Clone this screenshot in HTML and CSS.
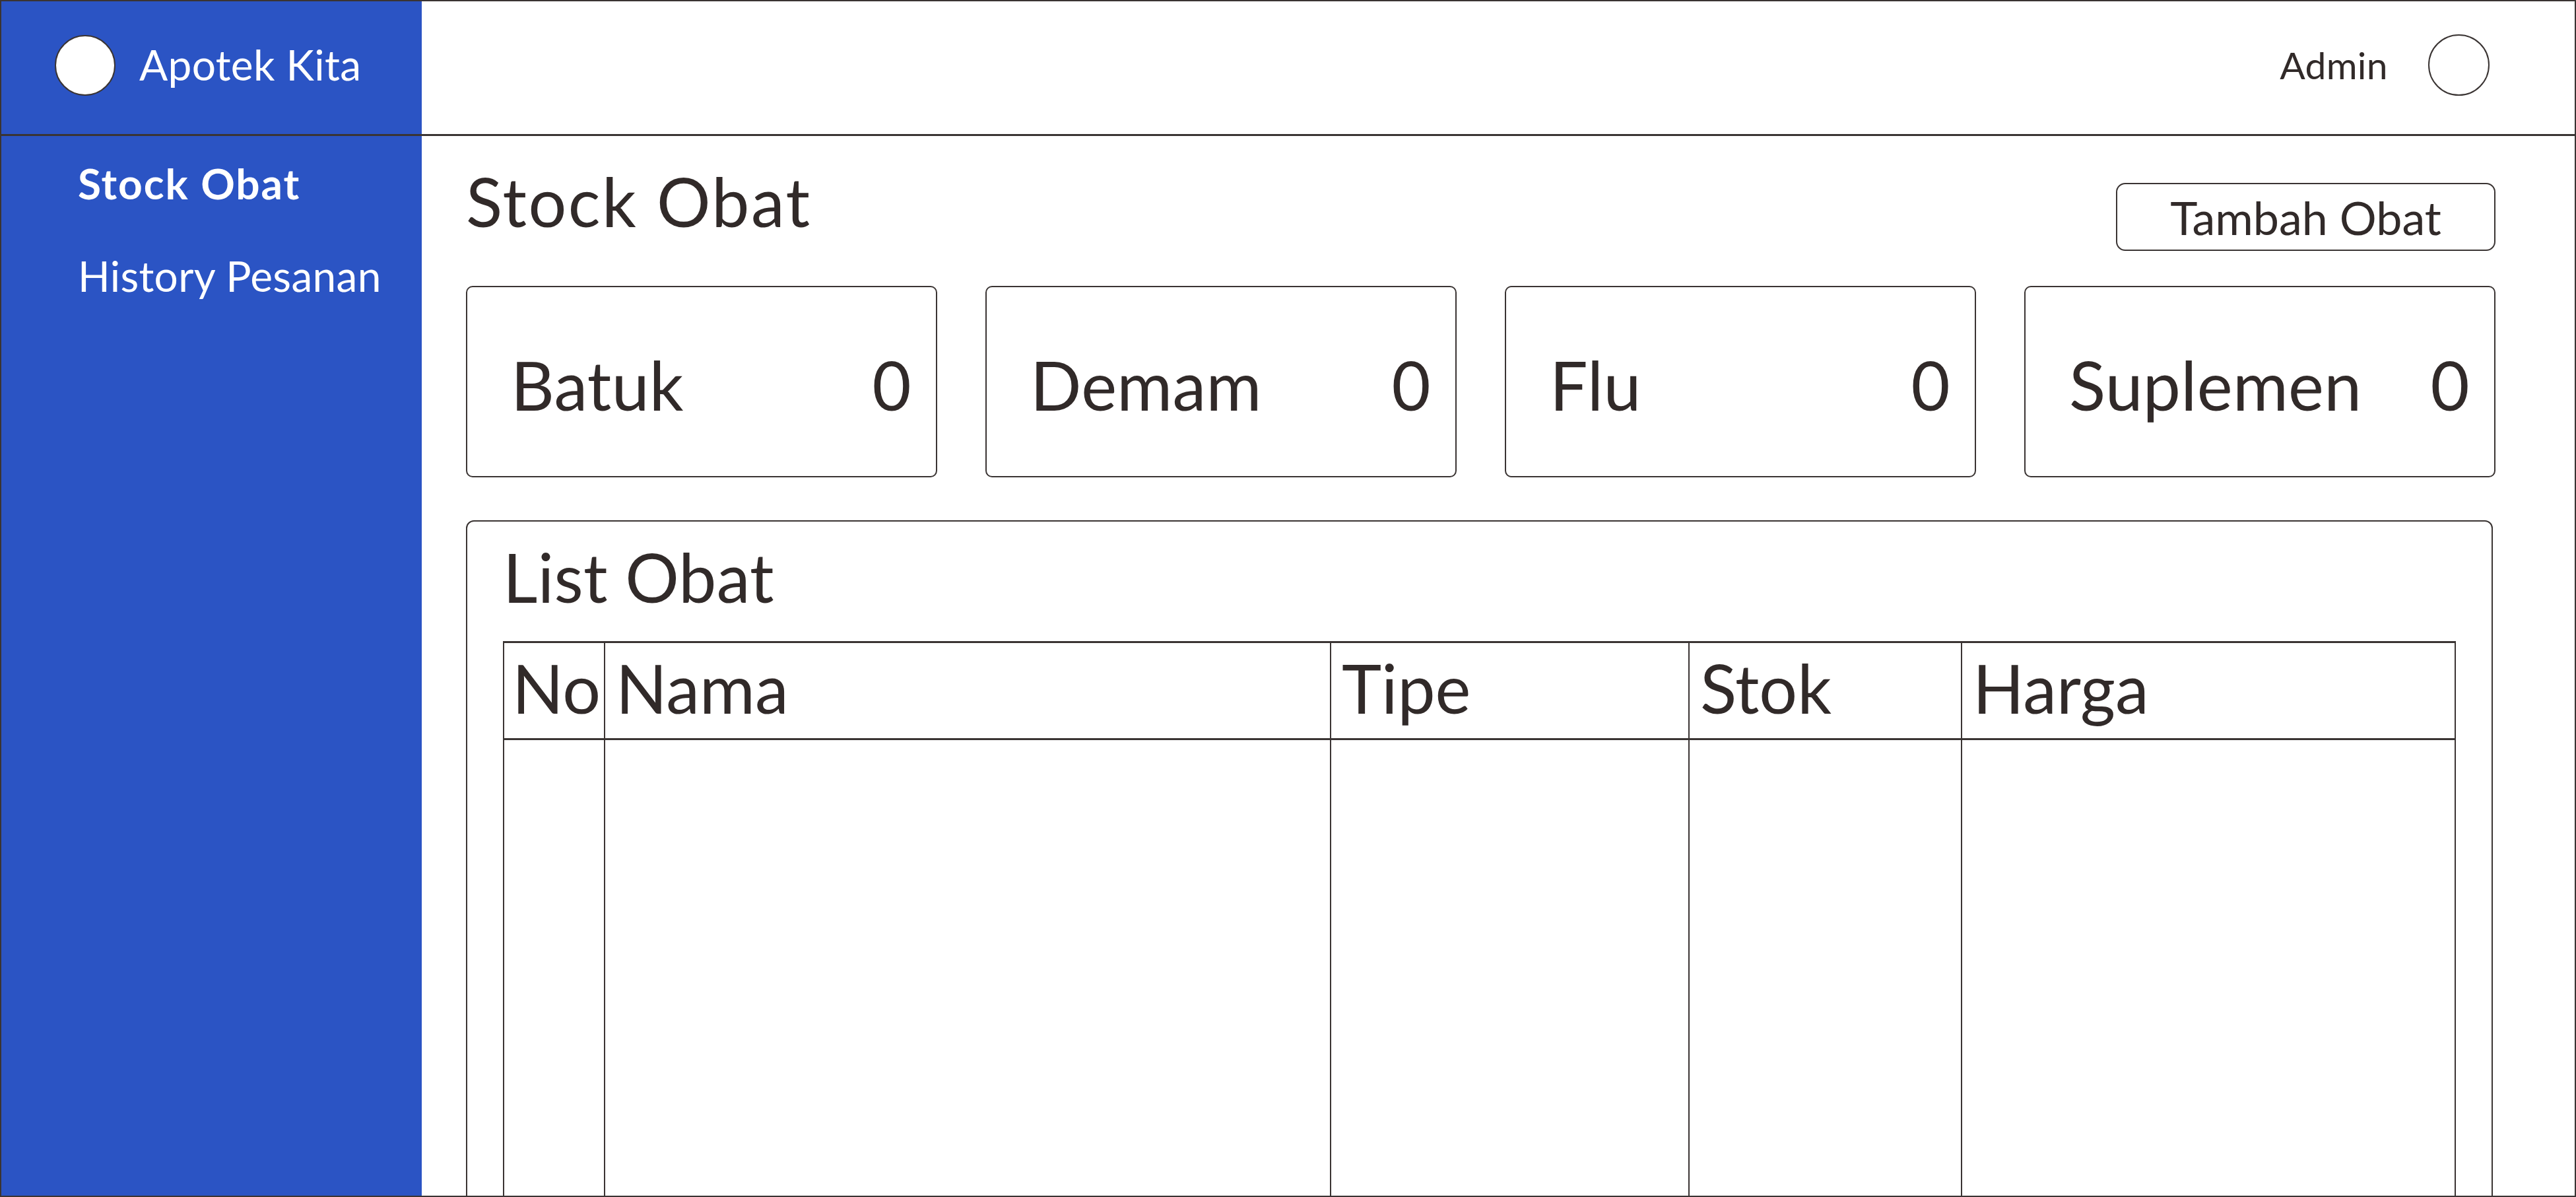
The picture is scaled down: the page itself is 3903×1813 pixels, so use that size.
FILE: index.html
```html
<!DOCTYPE html>
<html lang="id">
<head>
<meta charset="utf-8">
<title>Apotek Kita - Stock Obat</title>
<link rel="stylesheet" href="styles.css">
</head>
<body>
<div class="app">
  <div class="brand">
    <span class="logo"></span>
    <span class="brand-name">Apotek Kita</span>
  </div>
  <header class="topbar">
    <span class="user">Admin</span>
    <span class="avatar"></span>
  </header>
  <nav class="sidebar">
    <a class="nav-item active">Stock Obat</a>
    <a class="nav-item">History Pesanan</a>
  </nav>
  <main class="main">
    <div class="page-head">
      <h1 class="page-title">Stock Obat</h1>
      <button class="btn">Tambah Obat</button>
    </div>
    <div class="stats">
      <div class="stat"><span>Batuk</span><span>0</span></div>
      <div class="stat"><span>Demam</span><span>0</span></div>
      <div class="stat"><span>Flu</span><span>0</span></div>
      <div class="stat"><span>Suplemen</span><span>0</span></div>
    </div>
    <section class="list-card">
      <h2 class="list-title">List Obat</h2>
      <table class="table">
        <colgroup>
          <col class="c-no">
          <col class="c-nama">
          <col class="c-tipe">
          <col class="c-stok">
          <col class="c-harga">
        </colgroup>
        <thead>
          <tr><th class="th-no">No</th><th>Nama</th><th>Tipe</th><th>Stok</th><th>Harga</th></tr>
        </thead>
        <tbody>
          <tr><td></td><td></td><td></td><td></td><td></td></tr>
        </tbody>
      </table>
    </section>
  </main>
</div>
</body>
</html>
```
FILE: styles.css
```css
html, body {
  margin: 0;
  padding: 0;
  background: #ffffff;
}
body {
  font-family: Lato, "Noto Sans", sans-serif;
  color: #312a29;
  letter-spacing: 0.02em;
}
.app {
  width: 3903px;
  height: 1813px;
  box-sizing: border-box;
  border: 2px solid #3a3433;
  display: grid;
  grid-template-columns: 637px 1fr;
  grid-template-rows: 204px 1fr;
  overflow: hidden;
}
.brand {
  background: #2b54c4;
  display: flex;
  align-items: center;
  gap: 36px;
  padding: 0 0 8px 81px;
  box-sizing: border-box;
  border-bottom: 3px solid #3a3433;
}
.logo {
  width: 92px;
  height: 92px;
  box-sizing: border-box;
  border-radius: 50%;
  background: #ffffff;
  border: 2px solid #3a3433;
}
.brand-name {
  font-size: 64px;
  line-height: 1.2;
  color: #ffffff;
}
.topbar {
  display: flex;
  justify-content: flex-end;
  align-items: center;
  gap: 61px;
  padding: 0 129px 8px 0;
  box-sizing: border-box;
  border-bottom: 3px solid #3a3433;
}
.user {
  font-size: 57px;
  line-height: 1.2;
}
.avatar {
  width: 93px;
  height: 93px;
  box-sizing: border-box;
  border-radius: 50%;
  border: 2px solid #3a3433;
}
.sidebar {
  background: #2b54c4;
  display: flex;
  flex-direction: column;
  gap: 63px;
  padding: 34px 0 0 116px;
}
.nav-item {
  color: #ffffff;
  font-size: 64px;
  line-height: 1.2;
  text-decoration: none;
}
.nav-item.active {
  font-weight: 700;
  letter-spacing: 0.03em;
}
.main {
  padding: 38px 120px 0 67px;
  min-width: 0;
}
.page-head {
  display: flex;
  justify-content: space-between;
  align-items: flex-start;
}
.page-title {
  margin: 0;
  font-size: 102px;
  font-weight: 400;
  line-height: 1.2;
  letter-spacing: 0.025em;
}
.btn {
  margin-top: 33px;
  width: 575px;
  height: 103px;
  box-sizing: border-box;
  border: 2px solid #3a3433;
  border-radius: 14px;
  background: #ffffff;
  color: #312a29;
  font-family: Lato, "Noto Sans", sans-serif;
  font-size: 70px;
  line-height: 1;
  letter-spacing: 0;
  padding: 0;
}
.stats {
  display: grid;
  grid-template-columns: repeat(4, 1fr);
  gap: 73px;
  margin-top: 53px;
}
.stat {
  height: 290px;
  box-sizing: border-box;
  border: 2px solid #3a3433;
  border-radius: 10px;
  display: flex;
  justify-content: space-between;
  align-items: center;
  padding: 11px 37px 0 66px;
  font-size: 102px;
  line-height: 1.2;
}
.list-card {
  margin-top: 65px;
  margin-right: 4px;
  border: 2px solid #3a3433;
  border-radius: 12px;
  padding: 23px 54px 0 54px;
  height: 1200px;
}
.list-title {
  margin: 0 0 36px 0;
  font-size: 102px;
  font-weight: 400;
  line-height: 1.2;
}
.table {
  width: 100%;
  border-collapse: collapse;
  table-layout: fixed;
}
.c-no { width: 153px; }
.c-nama { width: 1100px; }
.c-tipe { width: 543px; }
.c-stok { width: 413px; }
.c-harga { width: auto; }
.table th {
  height: 147px;
  box-sizing: border-box;
  padding: 0 16px 8px 16px;
  text-align: left;
  font-size: 102px;
  font-weight: 400;
  line-height: 1.2;
  letter-spacing: 0;
  border: 2px solid #3a3433;
  border-top: 3px solid #3a3433;
  border-bottom: 3px solid #3a3433;
  white-space: nowrap;
}
.table th.th-no {
  padding-left: 12px;
  padding-right: 0;
}
.table td {
  height: 900px;
  border: 2px solid #3a3433;
  border-top: none;
}
```
